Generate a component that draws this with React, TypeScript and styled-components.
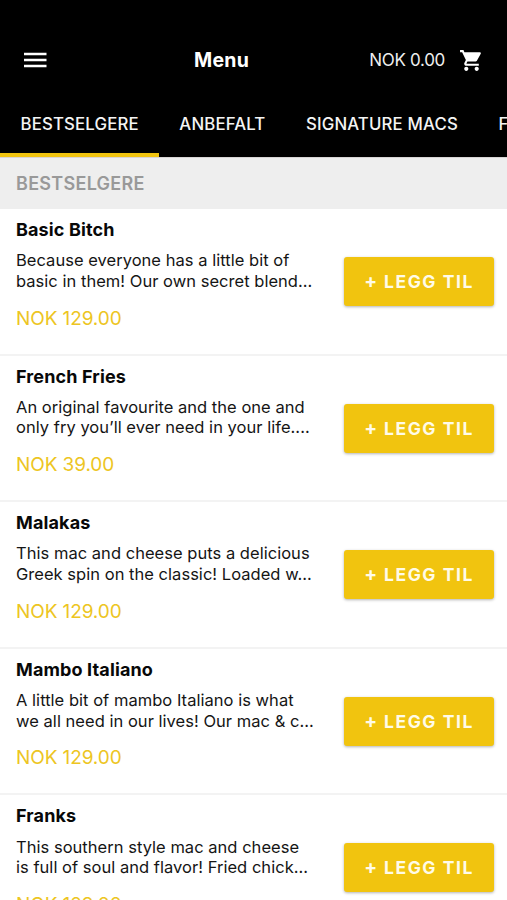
import React from 'react';
import styled, { createGlobalStyle } from 'styled-components';

const Global = createGlobalStyle`
  * { box-sizing: border-box; }
  body { margin: 0; background: #fff; font-family: Inter, "Liberation Sans", sans-serif; }
`;
const Screen = styled.div`
  height: 900px;
  overflow: hidden;
  background: #fff;
  color: #151515;
`;
const Header = styled.header`
  background: #000;
  color: #fff;
  padding-top: 30px;
  height: 157px;
  display: flex;
  flex-direction: column;
`;
const TopBar = styled.div`
  height: 60px;
  display: grid;
  grid-template-columns: 171px 1fr 172px;
  align-items: center;
  padding: 0 25px 0 23px;
`;
const MenuIcon = styled.svg`
  width: 24px;
  height: 18px;
  display: block;
`;
const Title = styled.h1`
  margin: 0;
  font-size: 19.5px;
  letter-spacing: 0.25px;
  line-height: 24px;
  font-weight: 700;
`;
const Cart = styled.div`
  display: flex;
  align-items: center;
  justify-content: flex-end;
  font-size: 17px;
  letter-spacing: -0.3px;
  line-height: 24px;
  white-space: nowrap;
  color: #eee;
`;
const CartIcon = styled.svg`
  width: 25px;
  height: 25px;
  margin: 0 -2px 0 14px;
  flex: none;
`;
const Tabs = styled.nav`
  height: 67px;
  display: flex;
  overflow: hidden;
`;
const Tab = styled.div<{ $active?: boolean }>`
  flex: none;
  padding: 22px 20px 0 20.5px;
  font-size: 16.8px;
  letter-spacing: 0.16px;
  line-height: 24px;
  font-weight: 500;
  color: #f4f4f4;
  border-bottom: 4px solid ${p => (p.$active ? '#f1c40f' : 'transparent')};
`;
const SectionTitle = styled.h2`
  margin: 0;
  height: 52px;
  padding-left: 16px;
  border-top: 1px solid #d8d4d4;
  background: #eee;
  color: #999;
  font-size: 18px;
  letter-spacing: 0.28px;
  line-height: 52px;
  font-weight: 600;
`;
const Item = styled.article`
  height: 146.6px;
  padding: 9px 13px 0 16px;
  display: flex;

  & + & {
    box-shadow: 0 -2px 0 #f3f3f3;
  }
`;
const Info = styled.div`
  flex: 1;
`;
const Name = styled.h3`
  margin: 0;
  font-size: 18px;
  letter-spacing: 0.13px;
  line-height: 24px;
  font-weight: 700;
  color: #080808;
`;
const Line = styled.span`
  display: block;
  white-space: nowrap;
`;
const Description = styled.p`
  margin: 8.2px 0 0;
  font-size: 16.5px;
  letter-spacing: 0.03px;
  line-height: 20.7px;
`;
const Price = styled.div`
  margin-top: 15px;
  font-size: 19px;
  letter-spacing: -0.1px;
  line-height: 24px;
  color: #edc522;
`;
const AddButton = styled.button`
  display: flex;
  align-items: center;
  justify-content: center;
  gap: 7px;
  width: 150px;
  height: 49px;
  margin-top: 39px;
  padding: 0;
  border: 0;
  border-radius: 3px;
  background: #f1c40f;
  color: #fffbe8;
  font: 700 17.5px/49px Inter, sans-serif;
  letter-spacing: 1.55px;
  box-shadow: 0 1px 3px rgba(0, 0, 0, 0.3);
`;
const Plus = styled.span`
  font-size: 19px;
  letter-spacing: 0;
`;

const tabs = ['BESTSELGERE', 'ANBEFALT', 'SIGNATURE MACS', 'F'];
const items = [
  { name: 'Basic Bitch', lines: ['Because everyone has a little bit of', 'basic in them! Our own secret blend...'], price: 'NOK 129.00' },
  { name: 'French Fries', lines: ['An original favourite and the one and', 'only fry you’ll ever need in your life....'], price: 'NOK 39.00' },
  { name: 'Malakas', lines: ['This mac and cheese puts a delicious', 'Greek spin on the classic! Loaded w...'], price: 'NOK 129.00' },
  { name: 'Mambo Italiano', lines: ['A little bit of mambo Italiano is what', 'we all need in our lives! Our mac & c...'], price: 'NOK 129.00' },
  { name: 'Franks', lines: ['This southern style mac and cheese', 'is full of soul and flavor! Fried chick...'], price: 'NOK 129.00' },
];

export default function App() {
  return (
    <Screen>
      <Global />
      <Header>
        <TopBar>
          <MenuIcon viewBox="0 0 24 18"><path d="M1 3h22.5M1 9h22.5M1 15h22.5" stroke="#fff" strokeWidth="2.3" /></MenuIcon>
          <Title>Menu</Title>
          <Cart>
            NOK 0.00
            <CartIcon viewBox="0 0 24 24" fill="#fff">
              <path d="M7 18c-1.1 0-1.99.9-1.99 2S5.9 22 7 22s2-.9 2-2-.9-2-2-2zM1 2v2h2l3.6 7.59-1.35 2.45c-.16.28-.25.61-.25.96 0 1.1.9 2 2 2h12v-2H7.42c-.14 0-.25-.11-.25-.25l.03-.12.9-1.63h7.45c.75 0 1.41-.41 1.75-1.03l3.58-6.49A1 1 0 0 0 20 4H5.21l-.94-2H1zm16 16c-1.1 0-1.99.9-1.99 2s.89 2 1.99 2 2-.9 2-2-.9-2-2-2z" />
            </CartIcon>
          </Cart>
        </TopBar>
        <Tabs>{tabs.map((t, i) => <Tab key={t} $active={i === 0}>{t}</Tab>)}</Tabs>
      </Header>
      <SectionTitle>BESTSELGERE</SectionTitle>
      {items.map(item => (
        <Item key={item.name}>
          <Info>
            <Name>{item.name}</Name>
            <Description>{item.lines.map(l => <Line key={l}>{l}</Line>)}</Description>
            <Price>{item.price}</Price>
          </Info>
          <AddButton><Plus>+</Plus><span>LEGG TIL</span></AddButton>
        </Item>
      ))}
    </Screen>
  );
}
